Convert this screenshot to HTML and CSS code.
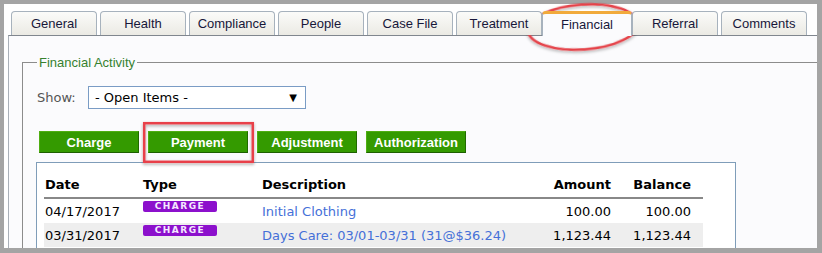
FILE: index.html
```html
<!DOCTYPE html>
<html lang="en">
<head>
    <meta charset="utf-8">
    <title>Financial</title>
    <link rel="stylesheet" href="styles.css">
</head>
<body>
<div class="frame">
    <ul class="tabs">
        <li class="tab">General</li>
        <li class="tab">Health</li>
        <li class="tab">Compliance</li>
        <li class="tab">People</li>
        <li class="tab">Case File</li>
        <li class="tab">Treatment</li>
        <li class="tab active">Financial</li>
        <li class="tab">Referral</li>
        <li class="tab">Comments</li>
    </ul>
    <div class="panel">
        <fieldset class="activity">
            <legend>Financial Activity</legend>
            <div class="filter">
                <span class="label">Show:</span>
                <div class="select">
                    <span>- Open Items -</span>
                    <span class="arrow">&#9660;</span>
                </div>
            </div>
            <div class="actions">
                <button class="btn">Charge</button>
                <button class="btn">Payment</button>
                <button class="btn">Adjustment</button>
                <button class="btn">Authorization</button>
            </div>
            <div class="grid">
                <table>
                    <thead>
                        <tr>
                            <th class="c-date">Date</th>
                            <th class="c-type">Type</th>
                            <th class="c-desc">Description</th>
                            <th class="c-amt num">Amount</th>
                            <th class="c-bal num">Balance</th>
                        </tr>
                    </thead>
                    <tbody>
                        <tr>
                            <td>04/17/2017</td>
                            <td class="type"><span class="badge">CHARGE</span></td>
                            <td><a class="link">Initial Clothing</a></td>
                            <td class="num">100.00</td>
                            <td class="num">100.00</td>
                        </tr>
                        <tr class="alt">
                            <td>03/31/2017</td>
                            <td class="type"><span class="badge">CHARGE</span></td>
                            <td><a class="link">Days Care: 03/01-03/31 (31@$36.24)</a></td>
                            <td class="num">1,123.44</td>
                            <td class="num">1,123.44</td>
                        </tr>
                    </tbody>
                </table>
            </div>
        </fieldset>
    </div>
</div>

<!-- annotation marks drawn over the screenshot -->
<svg class="marks" width="822" height="253" viewBox="0 0 822 253">
    <defs>
        <filter id="shade" x="-20%" y="-20%" width="140%" height="140%">
            <feDropShadow dx="0" dy="1.5" stdDeviation="1.5" flood-color="#000" flood-opacity="0.35"/>
        </filter>
    </defs>
    <ellipse cx="583" cy="27" rx="55" ry="22.5" transform="rotate(-4 583 27)"
             fill="none" stroke="#e5434a" stroke-width="2.5" filter="url(#shade)"/>
    <rect x="144.2" y="123.2" width="108.6" height="38.6"
          fill="none" stroke="#e8414a" stroke-width="2.5" filter="url(#shade)"/>
</svg>
</body>
</html>
```
FILE: styles.css
```css
*{
    box-sizing: border-box;
}
html,body{
    margin: 0;
    padding: 0;
    height: 100%;
}
body{
    position: relative;
    overflow: hidden;
    background-color: #a4a4a4;
}
.frame{
    height: 244px;
    margin: 4px 5px 0 4px;
    padding-top: 7px;
    overflow: hidden;
    background-color: #ffffff;
}

/* tab strip */
.tabs{
    position: relative;
    z-index: 1;
    display: flex;
    align-items: flex-end;
    gap: 3px;
    margin: 0 0 0 7px;
    padding: 0;
    list-style: none;
}
.tab{
    width: 86px;
    height: 24px;
    border: 1px solid #a7b2bd;
    border-bottom: none;
    border-radius: 4px 4px 0 0;
    background: linear-gradient(#fbfbf9, #ebeae4);
    font-family: "Liberation Sans", Arial, sans-serif;
    font-size: 13px;
    line-height: 23px;
    text-align: center;
    color: #17173a;
}
.tab.active{
    width: 90px;
    height: 25px;
    margin: 0 -3px -1px -3px;
    border-top: 3px solid #f1aa3c;
    background: #fbfbfd;
    line-height: 21px;
}

/* content panel */
.panel{
    height: 220px;
    margin: 0 -20px 0 4px;
    padding-left: 13px;
    border-top: 1px solid #80868e;
    border-left: 1px solid #a9b0b8;
    background-color: #fbfbfd;
}
.activity{
    min-width: 0;
    height: 220px;
    margin: 19px -30px 0 0;
    padding: 0 0 0 14px;
    border: 1px solid #8c8c8c;
}
.activity legend{
    margin-left: 0;
    padding: 0 2px;
    font-family: "Liberation Sans", Arial, sans-serif;
    font-size: 13px;
    line-height: 15px;
    color: #36812f;
}
.filter{
    display: flex;
    align-items: center;
    margin-top: 16px;
    font-family: "DejaVu Sans", Verdana, sans-serif;
    font-size: 13px;
}
.filter .label{
    width: 51px;
    color: #555555;
}
.select{
    display: flex;
    align-items: center;
    justify-content: space-between;
    width: 218px;
    height: 23px;
    padding: 0 8px 0 6px;
    border: 1px solid #7a9cc5;
    background-color: #ffffff;
    color: #000000;
}
.select .arrow{
    font-size: 10px;
}

/* action buttons */
.actions{
    display: flex;
    gap: 9px;
    margin-top: 22px;
    padding-left: 2px;
}
.btn{
    width: 100px;
    height: 22px;
    padding: 0;
    border: 1px solid;
    border-color: #4fae12 #216a00 #1d5f00 #4fae12;
    background-color: #349a00;
    font-family: "Liberation Sans", Arial, sans-serif;
    font-size: 13px;
    font-weight: bold;
    color: #ffffff;
}

/* activity grid */
.grid{
    width: 700px;
    height: 120px;
    margin: 9px 0 0 -1px;
    padding: 9px 0 0 7px;
    border: 1px solid #7f9db9;
    background-color: #ffffff;
}
.grid table{
    width: 659px;
    border-collapse: separate;
    border-spacing: 0;
    table-layout: fixed;
    font-family: "DejaVu Sans", Verdana, sans-serif;
    font-size: 13px;
    color: #000000;
}
.grid th{
    height: 27px;
    padding: 0 0 0 1px;
    border-bottom: 2px solid #888888;
    text-align: left;
    font-weight: bold;
}
.grid td{
    height: 24px;
    padding: 0 0 0 1px;
    white-space: nowrap;
}
.grid .num{
    padding: 0 12px 0 0;
    text-align: right;
}
.c-date{ width: 98px; }
.c-type{ width: 119px; }
.c-desc{ width: 272px; }
.c-amt{ width: 90px; }
.c-bal{ width: 80px; }
.grid tr.alt td{
    background-color: #eeeeee;
}
.grid td.type{
    vertical-align: top;
    padding-top: 2px;
}
.badge{
    display: block;
    width: 74px;
    height: 11px;
    border-radius: 2px;
    background-color: #8c10cc;
    font-family: "DejaVu Sans", sans-serif;
    font-size: 9px;
    font-weight: bold;
    line-height: 11px;
    letter-spacing: 1.5px;
    text-align: center;
    color: #f4e8ff;
}
.link{
    color: #4570d8;
    text-decoration: none;
}

.marks{
    position: absolute;
    top: 0;
    left: 0;
    pointer-events: none;
}
```
